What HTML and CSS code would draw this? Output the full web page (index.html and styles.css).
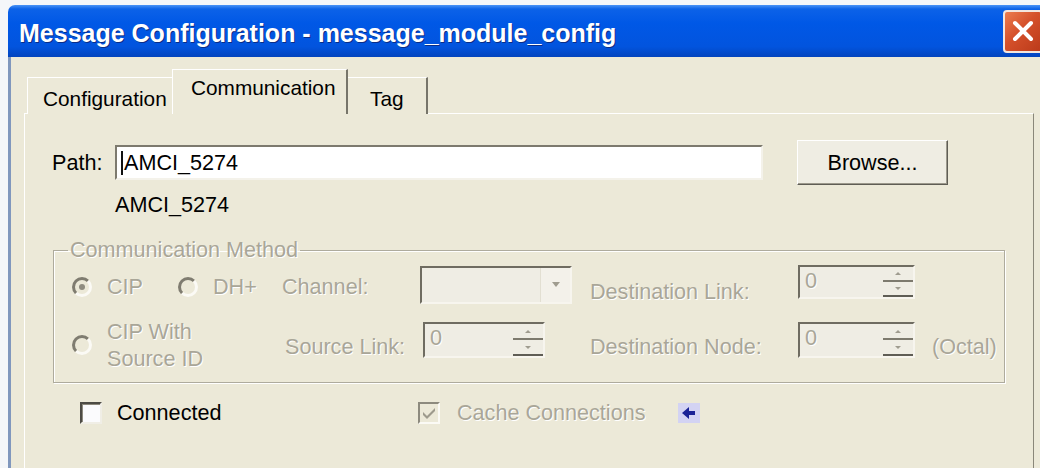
FILE: index.html
```html
<!DOCTYPE html>
<html lang="en">
<head>
<meta charset="utf-8">
<title>Message Configuration - message_module_config</title>
<link rel="stylesheet" href="styles.css">
</head>
<body>
<div class="window">
  <div class="titlebar">
    <span class="title">Message Configuration - message_module_config</span>
    <button class="close" type="button" aria-label="Close">
      <svg width="22" height="22" viewBox="0 0 22 22"><path d="M3 3 L19 19 M19 3 L3 19" stroke="#fff" stroke-width="4" stroke-linecap="round"/></svg>
    </button>
  </div>
  <div class="frame">
    <div class="tabs">
      <div class="tab tab-first">Configuration</div>
      <div class="tab tab-active">Communication</div>
      <div class="tab tab-last">Tag</div>
    </div>
    <div class="panel">
      <div class="path-row">
        <span class="path-label">Path:</span>
        <div class="textbox"><span class="caret"></span>AMCI_5274</div>
        <button class="btn" type="button">Browse...</button>
      </div>
      <div class="path-echo">AMCI_5274</div>

      <fieldset class="group">
        <legend class="dis">Communication Method</legend>
        <div class="method-grid">
          <div class="opt c1 r1"><span class="radio checked"></span><span class="dis">CIP</span></div>
          <div class="opt c2 r1"><span class="radio"></span><span class="dis">DH+</span></div>
          <div class="lbl c3 r1 dis">Channel:</div>
          <div class="combo c4 r1"><span class="combo-val"></span><span class="combo-btn"><svg width="10" height="6" viewBox="0 0 10 6"><path d="M1 0 L9 0 L5 5 Z" fill="#9f9c8f"/></svg></span></div>
          <div class="lbl c5 r1 dis lbl-low">Destination Link:</div>
          <div class="spin c6 r1 spin-a"><span class="spin-val dis">0</span><span class="spin-btns"><span class="spin-up"></span><span class="spin-down"></span></span></div>

          <div class="opt opt-two c12 r2"><span class="radio"></span><span class="dis two-line">CIP With<br>Source ID</span></div>
          <div class="lbl c3 r2 dis lbl-in">Source Link:</div>
          <div class="spin c4 r2 spin-b"><span class="spin-val dis">0</span><span class="spin-btns"><span class="spin-up"></span><span class="spin-down"></span></span></div>
          <div class="lbl c5 r2 dis">Destination Node:</div>
          <div class="spin c6 r2 spin-c"><span class="spin-val dis">0</span><span class="spin-btns"><span class="spin-up"></span><span class="spin-down"></span></span></div>
          <div class="lbl c7 r2 dis">(Octal)</div>
        </div>
      </fieldset>

      <div class="footer-row">
        <div class="check-item connected"><span class="checkbox"></span><span>Connected</span></div>
        <div class="check-item cache">
          <span class="checkbox disabled"><svg width="16" height="16" viewBox="0 0 16 16"><path d="M2 7 L6 11 L14 3 L14 6 L6 14 L2 10 Z" fill="#9d9a8c"/></svg></span>
          <span class="dis">Cache Connections</span>
        </div>
        <span class="link-icon"><svg width="22" height="20" viewBox="0 0 22 20"><rect width="22" height="20" fill="#d3d3f3"/><path d="M4 10 L11 4 L11 8 L17 8 L17 12 L11 12 L11 16 Z" fill="#1b2396"/></svg></span>
      </div>
    </div>
  </div>
</div>
</body>
</html>
```
FILE: styles.css
```css
* { box-sizing: border-box; }

body {
  margin: 0;
  background: #f4f6f9;
  overflow: hidden;
  font-family: "Liberation Sans", Arial, sans-serif;
  font-size: 21.6px;
  color: #000;
}

/* window chrome */
.window {
  margin: 5px 0 0 8px;
  width: 1040px;
}

.titlebar {
  height: 52px;
  display: flex;
  align-items: center;
  justify-content: space-between;
  padding: 0 5px 0 11px;
  border-radius: 7px 7px 0 0;
  background: linear-gradient(#4a93f6 0, #0c62e8 4px, #0058e6 35%, #0254de 80%, #0344bd 100%);
}

.title {
  color: #fff;
  font-weight: bold;
  font-size: 25px;
  padding-top: 4px;
  text-shadow: 1px 1px 0 #0b2d86;
  white-space: nowrap;
}

.close {
  width: 40px;
  height: 43px;
  padding: 0;
  border: 2px solid #f3e6de;
  border-radius: 4px;
  background: linear-gradient(135deg, #ec7d50, #d4502a 45%, #bb3a1a);
  display: flex;
  align-items: center;
  justify-content: center;
}

.frame {
  background: #ece9d8;
  border-left: 3px solid #8097bd;
  padding: 0 11px 60px 13px;
}

/* tabs */
.tabs {
  position: relative;
  display: flex;
  align-items: flex-end;
  height: 57px;
  padding-left: 3px;
  margin-bottom: -1px;
}

.tab {
  height: 37px;
  font-size: 20.8px;
  line-height: 24px;
  padding-top: 9px;
  background: #ece9d8;
  white-space: nowrap;
  border-top: 1px solid #fff;
}

.tab-first {
  width: 145px;
  padding-left: 15px;
  border-left: 1px solid #fff;
}

.tab-active {
  width: 176px;
  height: 45px;
  padding-top: 6px;
  padding-left: 18px;
  border-left: 1px solid #fff;
  border-right: 2px solid #77756a;
}

.tab-last {
  width: 80px;
  padding-left: 22px;
  border-right: 2px solid #77756a;
}

/* tab page */
.panel {
  width: 1010px;
  border: 1px solid;
  border-color: #fff #8a877a #8a877a #fff;
  background: #ece9d8;
  padding: 26px 0 40px 27px;
}

.path-row {
  display: flex;
  align-items: center;
  height: 45px;
}

.path-label {
  width: 63px;
}

.textbox {
  width: 648px;
  height: 35px;
  display: flex;
  align-items: center;
  padding-left: 4px;
  background: #fff;
  border: 2px solid;
  border-color: #7d7a6e #f4f2ea #f4f2ea #7d7a6e;
}

.caret {
  display: inline-block;
  width: 2px;
  height: 24px;
  background: #111;
  margin-right: 1px;
}

.btn {
  margin-left: 34px;
  width: 151px;
  height: 45px;
  font: inherit;
  color: #000;
  background: #efede3;
  border: 1px solid;
  border-color: #fff #5f5d55 #5f5d55 #fff;
  box-shadow: inset -1px -1px 0 #9c998c;
}

.path-echo {
  margin-top: 8px;
  padding-left: 63px;
  line-height: 24px;
}

/* disabled text */
.dis {
  color: #a9a698;
  text-shadow: 1px 1px 0 #fff;
}

/* group box */
.group {
  margin: 23px 0 0 1px;
  width: 952px;
  padding: 3px 0 9px 18px;
  border: 1px solid #aeab9d;
  box-shadow: 1px 1px 0 #fff, inset 1px 1px 0 #fff;
}

.group legend {
  margin-left: -4px;
  padding: 0 2px;
  line-height: 20px;
}

.method-grid {
  display: grid;
  grid-template-columns: 106px 104px 138px 170px 208px 134px auto;
  grid-template-rows: 44px 56px;
  row-gap: 10px;
  align-items: center;
}

.c1 { grid-column: 1; }
.c2 { grid-column: 2; }
.c12 { grid-column: 1 / 3; }
.c3 { grid-column: 3; }
.c4 { grid-column: 4; }
.c5 { grid-column: 5; }
.c6 { grid-column: 6; }
.c7 { grid-column: 7; }
.r1 { grid-row: 1; }
.r2 { grid-row: 2; }

.opt {
  display: flex;
  align-items: center;
  gap: 15px;
  padding-top: 4px;
}

.opt-two {
  padding-top: 0;
}

.two-line {
  line-height: 27px;
}

.lbl {
  white-space: nowrap;
  padding-top: 4px;
}

.lbl-low { padding-top: 14px; }
.lbl-in { padding-left: 3px; }

.radio {
  flex: none;
  width: 20px;
  height: 20px;
  border-radius: 50%;
  border: 3px solid;
  border-color: #7f7c70 #fbfaf5 #fbfaf5 #7f7c70;
  background: #ece9d8;
  display: flex;
  align-items: center;
  justify-content: center;
}

.radio.checked::after {
  content: "";
  width: 6px;
  height: 6px;
  border-radius: 50%;
  background: #8f8c80;
}

/* combo and spin boxes (disabled) */
.combo,
.spin {
  display: flex;
  border: 2px solid;
  border-color: #6f6c61 #f7f5ee #f7f5ee #6f6c61;
  background: #efede4;
}

.combo {
  width: 152px;
  height: 38px;
}

.combo-val { flex: 1; }

.combo-btn {
  width: 30px;
  display: flex;
  align-items: center;
  justify-content: center;
  background: #f3f1ea;
  border-left: 1px solid #e2dfd2;
}

.spin {
  width: 117px;
  height: 34px;
  align-self: start;
  margin-top: 2px;
}

.spin-b {
  width: 122px;
  height: 36px;
  margin-top: 5px;
  margin-left: 3px;
}

.spin-c {
  height: 36px;
  margin-top: 5px;
}

.spin-val {
  flex: 1;
  padding-left: 5px;
  line-height: 28px;
}

.spin-btns {
  width: 30px;
  display: flex;
  flex-direction: column;
  border-bottom: 2px solid #5f5d55;
}

.spin-up,
.spin-down {
  flex: 1;
  display: flex;
  align-items: center;
  justify-content: center;
}

.spin-up {
  border-bottom: 2px solid #7d7a6e;
}

.spin-up::after,
.spin-down::after {
  content: "";
  border-left: 3px solid transparent;
  border-right: 3px solid transparent;
}

.spin-up::after { border-bottom: 3px solid #9f9c8f; }
.spin-down::after { border-top: 3px solid #9f9c8f; }

/* bottom row */
.footer-row {
  margin-top: 15px;
  height: 30px;
  display: flex;
  align-items: center;
  padding-left: 28px;
}

.check-item {
  display: flex;
  align-items: center;
}

.connected {
  width: 338px;
  gap: 15px;
}

.cache {
  gap: 17px;
}

.checkbox {
  flex: none;
  width: 22px;
  height: 22px;
  background: #fbfbfd;
  border: 2px solid;
  border-color: #4d4b44 #f0eee6 #f0eee6 #4d4b44;
  box-shadow: inset 1px 1px 0 #8d8a7e;
  display: flex;
  align-items: center;
  justify-content: center;
}

.checkbox.disabled {
  background: #ece9d8;
  border-color: #8d8a7e #fbfaf5 #fbfaf5 #8d8a7e;
  box-shadow: none;
}

.link-icon {
  display: flex;
  margin-left: 33px;
}
```
